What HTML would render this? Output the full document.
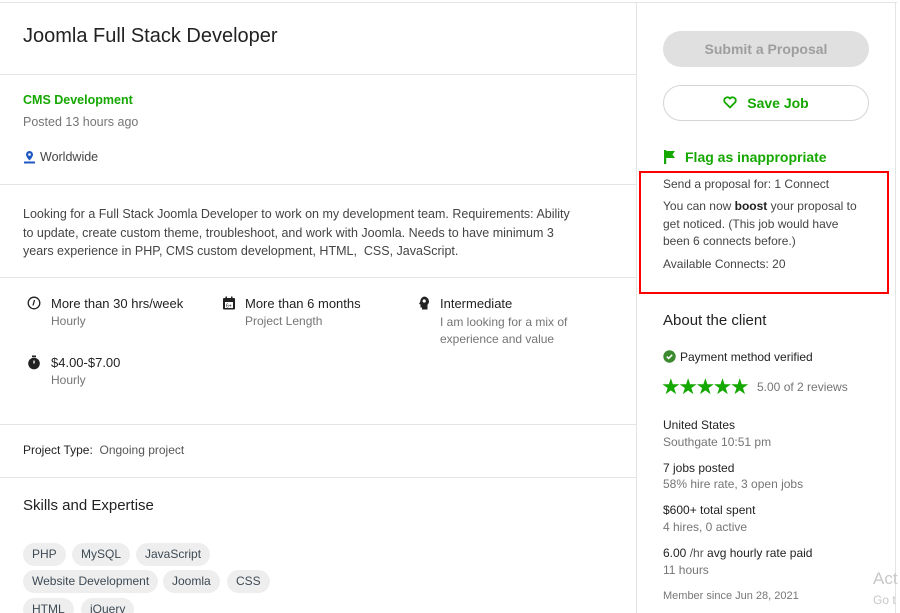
<!DOCTYPE html>
<html><head><meta charset="utf-8"><style>
*{margin:0;padding:0;box-sizing:border-box}
html,body{width:900px;height:613px;overflow:hidden}
body{background:#fff;font-family:"Liberation Sans",Arial,sans-serif;color:#222;position:relative}
.a{position:absolute;white-space:nowrap}
.hr{position:absolute;height:1px;background:#e4e4e4}
.g{color:#757575}
.pill{position:absolute;height:23px;line-height:23px;background:#eeeeee;border-radius:12px;font-size:12px;color:#3d4a55;padding:0 9px}
.s13{font-size:13px}
.s12{font-size:12px}
</style></head><body>
<div class="hr" style="left:0;top:2px;width:897px"></div>
<div style="position:absolute;left:895px;top:2px;width:1px;height:611px;background:#e4e4e4"></div>
<div style="position:absolute;left:636px;top:2px;width:1px;height:611px;background:#e4e4e4"></div>

<div class="a" style="left:23px;top:25px;font-size:20px;color:#222">Joomla Full Stack Developer</div>
<div class="hr" style="left:0;top:74px;width:636px"></div>
<div class="a" style="left:23px;top:93px;font-size:12.5px;color:#14a800;font-weight:bold">CMS Development</div>
<div class="a g" style="left:23px;top:115px;font-size:12.5px">Posted 13 hours ago</div>
<svg class="a" style="left:23px;top:150px" width="13" height="14" viewBox="0 0 13 14"><path d="M6.5 1a3.5 3.5 0 0 1 3.5 3.5c0 2.5-3.5 6-3.5 6S3 7 3 4.5A3.5 3.5 0 0 1 6.5 1z" fill="#1f57c3"/><circle cx="6.5" cy="4.5" r="1.3" fill="#fff"/><path d="M1 12.5h11" stroke="#1f57c3" stroke-width="2"/></svg>
<div class="a" style="left:40px;top:150px;font-size:12.5px;color:#444">Worldwide</div>
<div class="hr" style="left:0;top:184px;width:636px"></div>

<div class="a" style="left:23px;top:205px;font-size:12.5px;line-height:18.5px;color:#444">Looking for a Full Stack Joomla Developer to work on my development team. Requirements: Ability<br>to update, create custom theme, troubleshoot, and work with Joomla. Needs to have minimum 3<br>years experience in PHP, CMS custom development, HTML,&nbsp; CSS, JavaScript.</div>
<div class="hr" style="left:0;top:277px;width:636px"></div>

<svg class="a" style="left:27px;top:296px" width="14" height="14" viewBox="0 0 14 14"><circle cx="7" cy="7" r="5.8" fill="none" stroke="#222" stroke-width="1.3"/><path d="M7.5 4L6 9.5" stroke="#222" stroke-width="1.3"/></svg>
<div class="a s13" style="left:51px;top:296px">More than 30 hrs/week</div>
<div class="a s12 g" style="left:51px;top:314px">Hourly</div>
<svg class="a" style="left:222px;top:296px" width="14" height="14" viewBox="0 0 14 14"><rect x="1" y="2" width="12" height="11.5" rx="1" fill="#222"/><rect x="3" y="6" width="8" height="6" fill="#fff"/><rect x="3.5" y="0.5" width="1.5" height="3" fill="#222"/><rect x="9" y="0.5" width="1.5" height="3" fill="#222"/><text x="4" y="11.5" font-size="5" fill="#222" font-family="Liberation Sans">6+</text></svg>
<div class="a s13" style="left:245px;top:296px">More than 6 months</div>
<div class="a s12 g" style="left:245px;top:314px">Project Length</div>
<svg class="a" style="left:418px;top:296px" width="12" height="14" viewBox="0 0 12 14"><path d="M6 0.5a5 5 0 0 1 5 5c0 1.5-.7 2.5-1.5 3.3V13.5H4v-2H2.5V8.5L1 8l1.3-2.5A5 5 0 0 1 6 .5z" fill="#222"/><circle cx="6.2" cy="5" r="1.6" fill="#fff"/></svg>
<div class="a s13" style="left:440px;top:296px">Intermediate</div>
<div class="a s12 g" style="left:440px;top:314px;line-height:17px">I am looking for a mix of<br>experience and value</div>
<svg class="a" style="left:27px;top:355px" width="14" height="15" viewBox="0 0 14 15"><circle cx="7" cy="8.5" r="5.8" fill="#222"/><rect x="5" y="0.5" width="4" height="1.7" fill="#222"/><path d="M7 8.5V5.5" stroke="#fff" stroke-width="1.3"/></svg>
<div class="a s13" style="left:51px;top:355px">$4.00-$7.00</div>
<div class="a s12 g" style="left:51px;top:373px">Hourly</div>
<div class="hr" style="left:0;top:424px;width:636px"></div>

<div class="a s12" style="left:23px;top:443px;color:#333"><span style="color:#222">Project Type:</span>&nbsp; <span style="color:#555">Ongoing project</span></div>
<div class="hr" style="left:0;top:477px;width:636px"></div>
<div class="a" style="left:23px;top:497px;font-size:15px;color:#222">Skills and Expertise</div>
<div class="pill" style="left:23px;top:543px">PHP</div>
<div class="pill" style="left:72px;top:543px">MySQL</div>
<div class="pill" style="left:136px;top:543px">JavaScript</div>
<div class="pill" style="left:23px;top:570px">Website Development</div>
<div class="pill" style="left:163px;top:570px">Joomla</div>
<div class="pill" style="left:227px;top:570px">CSS</div>
<div class="pill" style="left:23px;top:598px">HTML</div>
<div class="pill" style="left:81px;top:598px">jQuery</div>

<div class="a" style="left:663px;top:31px;width:206px;height:36px;border-radius:18px;background:#e0e0e0;color:#9e9e9e;font-size:14px;font-weight:bold;text-align:center;line-height:36px">Submit a Proposal</div>
<div class="a" style="left:663px;top:85px;width:206px;height:36px;border-radius:18px;border:1px solid #d5d5d5;color:#14a800;font-size:14px;font-weight:bold;text-align:center;line-height:34px"><svg width="14" height="13" viewBox="0 0 14 13" style="vertical-align:-1px;margin-right:10px"><path d="M7 11.5L1.8 6.3A3 3 0 0 1 7 2.6a3 3 0 0 1 5.2 3.7z" fill="none" stroke="#14a800" stroke-width="1.8" stroke-linejoin="round"/></svg>Save Job</div>
<svg class="a" style="left:664px;top:150px" width="13" height="14" viewBox="0 0 13 14"><rect x="0" y="0" width="2.2" height="14" fill="#14a800"/><path d="M2 1h9l-2.5 3.5L11 8H2z" fill="#14a800"/></svg>
<div class="a" style="left:685px;top:149px;font-size:14px;font-weight:bold;color:#14a800">Flag as inappropriate</div>

<div class="a" style="left:639px;top:171px;width:250px;height:123px;border:2px solid #ff0000"></div>
<div class="a s12" style="left:663px;top:177px;color:#444">Send a proposal for: 1 Connect</div>
<div class="a s12" style="left:663px;top:198px;color:#444;line-height:17.5px">You can now <b style="color:#222">boost</b> your proposal to<br>get noticed. (This job would have<br>been 6 connects before.)</div>
<div class="a s12" style="left:663px;top:257px;color:#444">Available Connects: 20</div>

<div class="a" style="left:663px;top:312px;font-size:15px;color:#222">About the client</div>
<svg class="a" style="left:663px;top:350px" width="13" height="13" viewBox="0 0 13 13"><circle cx="6.5" cy="6.5" r="6.2" fill="#3c8a2e"/><path d="M3.8 6.6l1.9 1.8 3.5-3.6" fill="none" stroke="#fff" stroke-width="1.5"/></svg>
<div class="a s12" style="left:680px;top:350px;color:#222">Payment method verified</div>
<div class="a" style="left:661px;top:374px;font-size:22px;color:#14a800;letter-spacing:-2.5px;line-height:25px">★★★★★</div>
<div class="a s12 g" style="left:757px;top:380px">5.00 of 2 reviews</div>
<div class="a s12" style="left:663px;top:418px">United States</div>
<div class="a s12 g" style="left:663px;top:435px">Southgate 10:51 pm</div>
<div class="a s12" style="left:663px;top:461px">7 jobs posted</div>
<div class="a s12 g" style="left:663px;top:477px">58% hire rate, 3 open jobs</div>
<div class="a s12" style="left:663px;top:503px">$600+ total spent</div>
<div class="a s12 g" style="left:663px;top:520px">4 hires, 0 active</div>
<div class="a s12" style="left:663px;top:546px">6.00 <span style="color:#555">/hr</span> avg hourly rate paid</div>
<div class="a s12 g" style="left:663px;top:563px">11 hours</div>
<div class="a" style="left:663px;top:590px;font-size:11px;color:#777">Member since Jun 28, 2021</div>
<div class="a" style="left:873px;top:569px;font-size:17px;color:#c8c8c8">Act</div>
<div class="a" style="left:873px;top:593px;font-size:12px;color:#c8c8c8">Go t</div>
</body></html>
